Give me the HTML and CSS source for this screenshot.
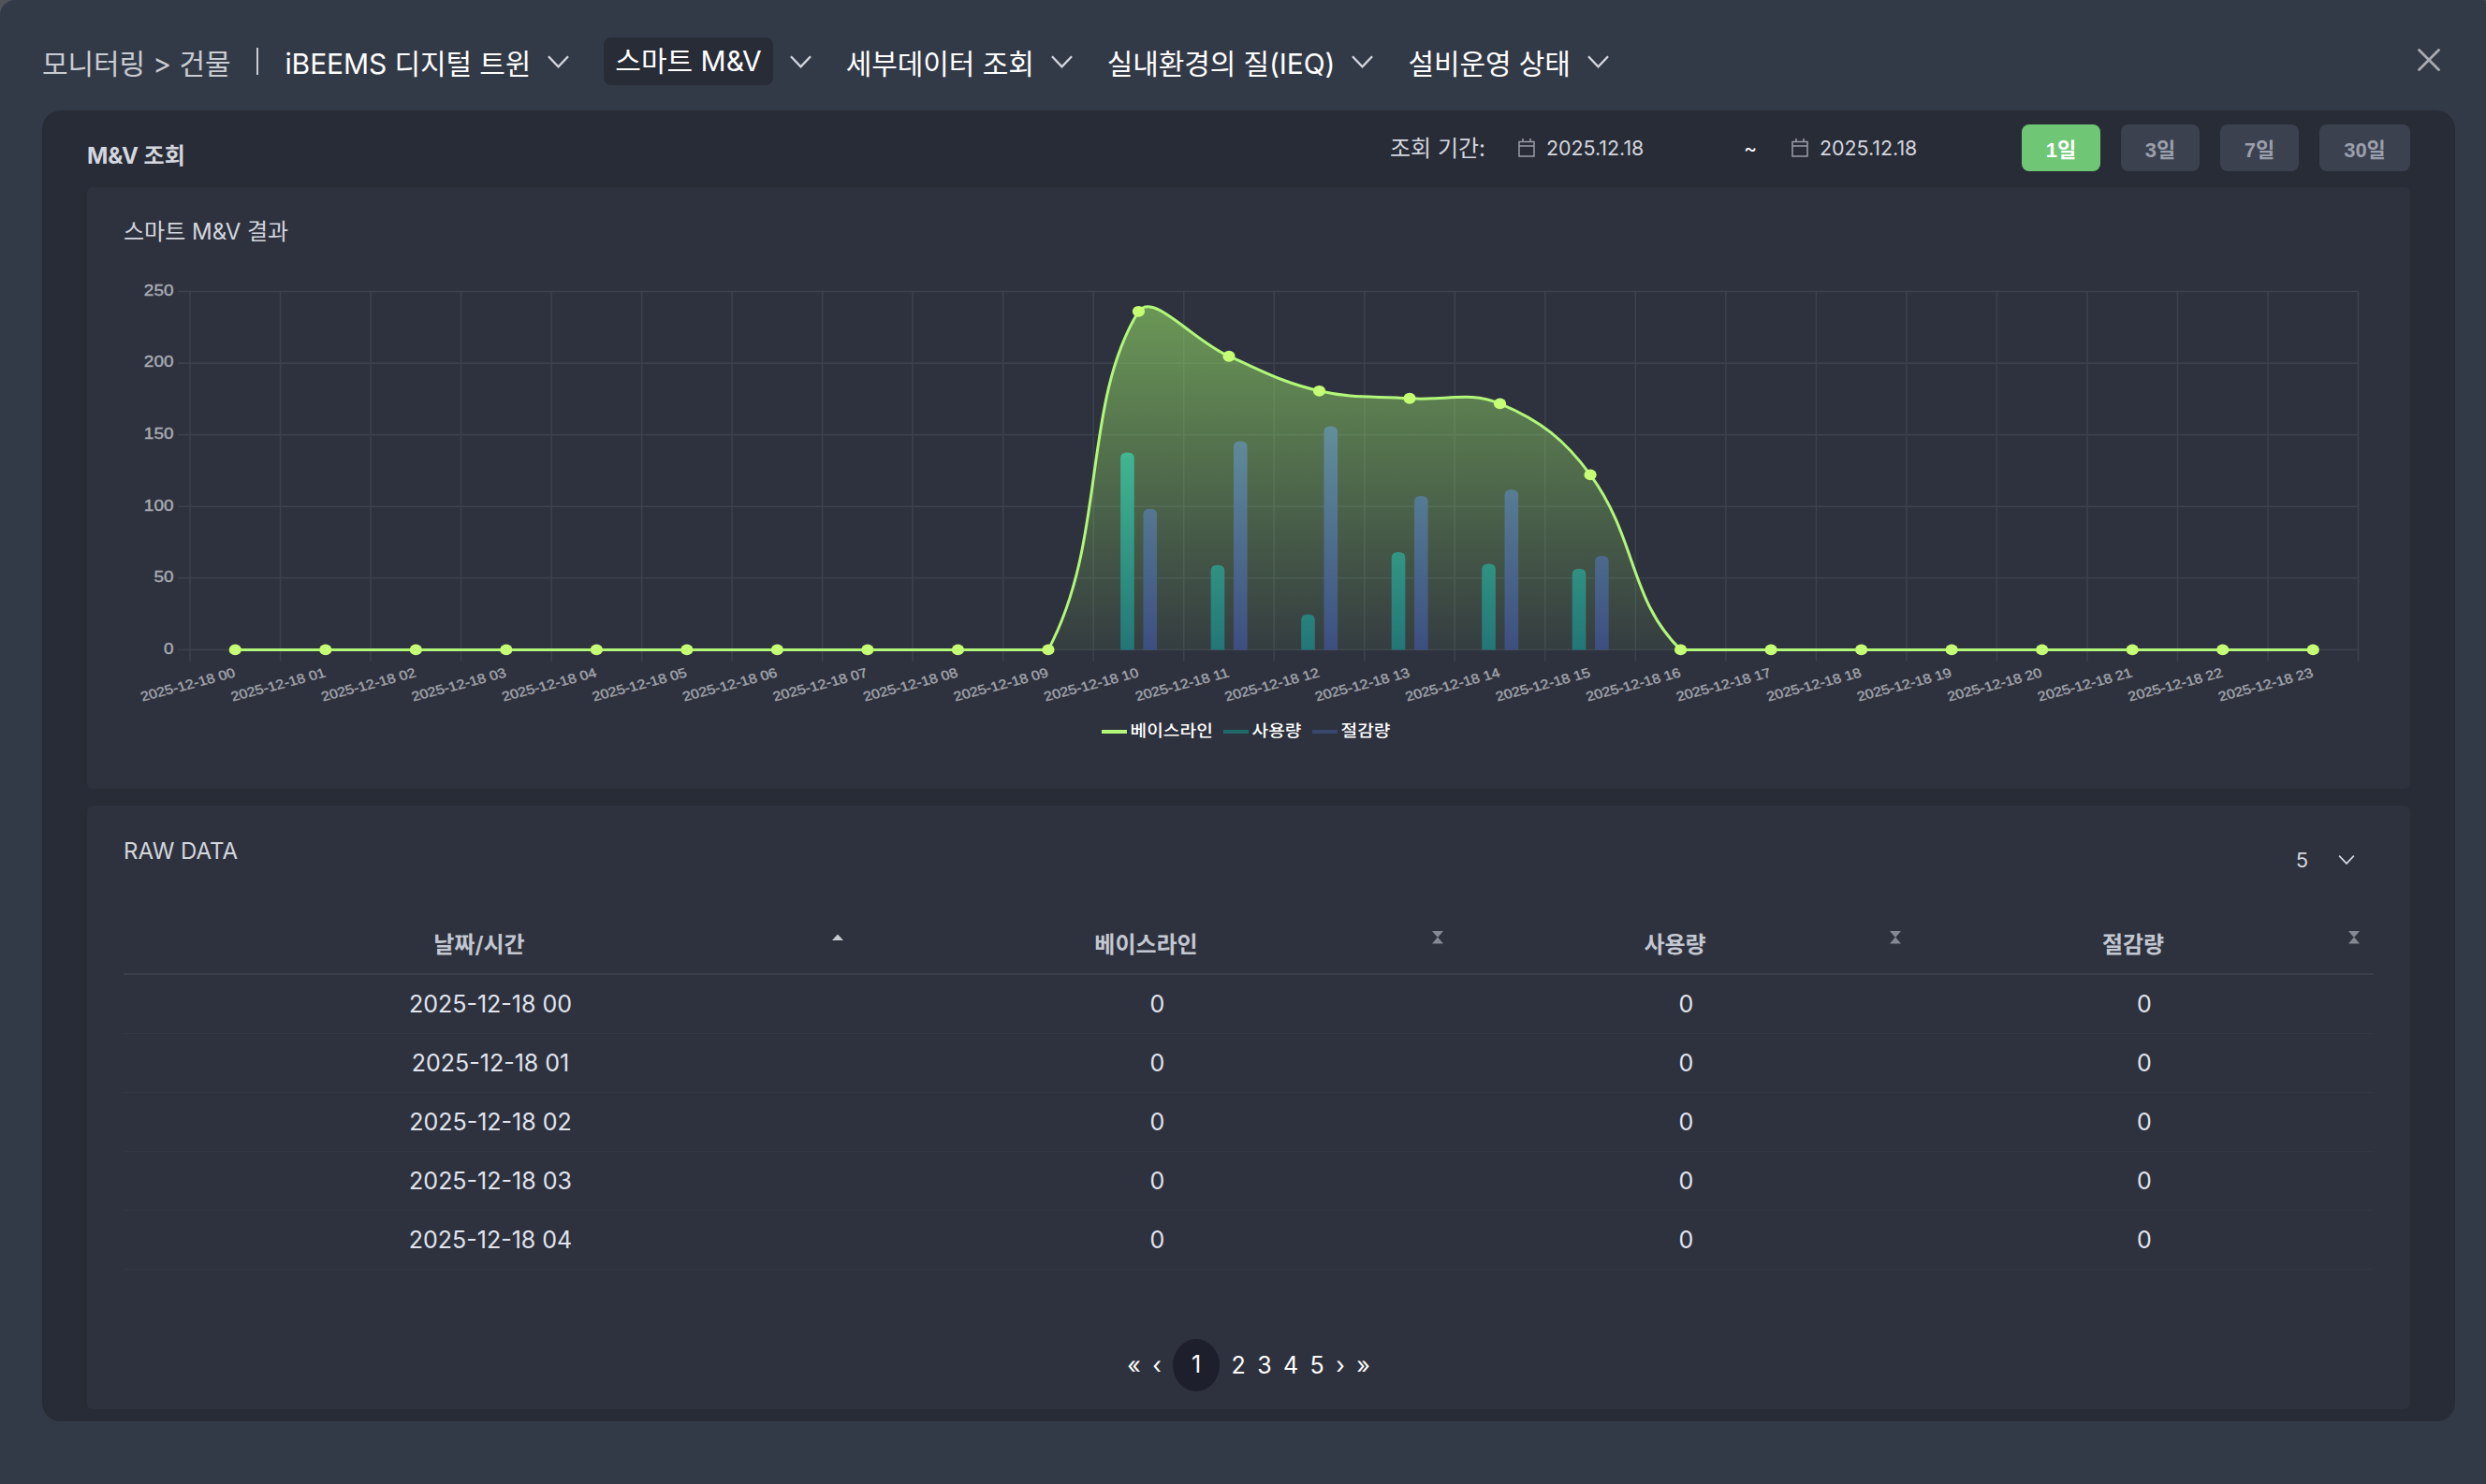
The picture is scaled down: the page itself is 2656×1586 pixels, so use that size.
FILE: index.html
```html
<!DOCTYPE html>
<html lang="ko">
<head>
    <meta charset="UTF-8">
    <meta name="viewport" content="width=device-width, initial-scale=1.0">
    <title>스마트 M&amp;V</title>
    <link rel="stylesheet" href="styles.css">
</head>
<body>
    <div class="modal">
        <div class="header">
            <div class="breadcrumb">모니터링 &gt; 건물</div>
            <div class="divider"></div>
            <div class="nav">
                <div class="nav-item"><span>iBEEMS 디지털 트윈</span><svg class="chevron" viewBox="0 0 24 14"><path d="M1 1L12 12.5L23 1"/></svg></div>
                <div class="nav-item active"><span>스마트 M&amp;V</span><svg class="chevron" viewBox="0 0 24 14"><path d="M1 1L12 12.5L23 1"/></svg></div>
                <div class="nav-item"><span>세부데이터 조회</span><svg class="chevron" viewBox="0 0 24 14"><path d="M1 1L12 12.5L23 1"/></svg></div>
                <div class="nav-item"><span>실내환경의 질(IEQ)</span><svg class="chevron" viewBox="0 0 24 14"><path d="M1 1L12 12.5L23 1"/></svg></div>
                <div class="nav-item"><span>설비운영 상태</span><svg class="chevron" viewBox="0 0 24 14"><path d="M1 1L12 12.5L23 1"/></svg></div>
            </div>
            <svg class="close" viewBox="0 0 24 24"><path d="M1.5 1.5L22.5 22.5M22.5 1.5L1.5 22.5"/></svg>
        </div>

        <div class="panel">
            <div class="toolbar">
                <h1>M&amp;V 조회</h1>
                <div class="period">
                    <span class="period-label">조회 기간:</span>
                    <div class="date">
                        <svg class="calendar" viewBox="0 0 18 20"><path d="M1 3.5H17V19H1ZM1 8H17M5 0V3.5M13 0V3.5"/></svg>
                        <span>2025.12.18</span>
                    </div>
                    <span class="tilde">~</span>
                    <div class="date">
                        <svg class="calendar" viewBox="0 0 18 20"><path d="M1 3.5H17V19H1ZM1 8H17M5 0V3.5M13 0V3.5"/></svg>
                        <span>2025.12.18</span>
                    </div>
                </div>
                <div class="range">
                    <button class="selected">1일</button>
                    <button>3일</button>
                    <button>7일</button>
                    <button>30일</button>
                </div>
            </div>

            <div class="card chart-card">
                <h2>스마트 M&amp;V 결과</h2>
                <svg id="chart" class="chart" viewBox="0 0 2442 520">
                    <defs>
                        <linearGradient id="areaFill" gradientUnits="userSpaceOnUse" x1="0" y1="32" x2="0" y2="415">
                            <stop offset="0" stop-color="#96e168" stop-opacity="0.6"/>
                            <stop offset="1" stop-color="#96e168" stop-opacity="0.06"/>
                        </linearGradient>
                        <linearGradient id="usageFill" gradientUnits="userSpaceOnUse" x1="0" y1="175" x2="0" y2="415">
                            <stop offset="0" stop-color="#44bf95"/>
                            <stop offset="1" stop-color="#237677"/>
                        </linearGradient>
                        <linearGradient id="savingFill" gradientUnits="userSpaceOnUse" x1="0" y1="175" x2="0" y2="415">
                            <stop offset="0" stop-color="#628f9b"/>
                            <stop offset="1" stop-color="#3c4f80"/>
                        </linearGradient>
                    </defs>
                </svg>
            </div>

            <div class="card table-card">
                <div class="table-top">
                    <h2>RAW DATA</h2>
                    <div class="page-size"><span>5</span><svg class="chevron small" viewBox="0 0 24 14"><path d="M1 1L12 12.5L23 1"/></svg></div>
                </div>
                <table>
                    <thead>
                        <tr>
                            <th class="col-date"><div class="th"><span>날짜/시간</span><svg class="sort on" viewBox="0 0 12 14"><path d="M0 10H12L6 3.5Z"/></svg></div></th>
                            <th class="col-base"><div class="th"><span>베이스라인</span><svg class="sort" viewBox="0 0 12 14"><path d="M0 0H12L6 7ZM0 13.5H12L6 6.5Z"/></svg></div></th>
                            <th class="col-use"><div class="th"><span>사용량</span><svg class="sort" viewBox="0 0 12 14"><path d="M0 0H12L6 7ZM0 13.5H12L6 6.5Z"/></svg></div></th>
                            <th class="col-save"><div class="th"><span>절감량</span><svg class="sort" viewBox="0 0 12 14"><path d="M0 0H12L6 7ZM0 13.5H12L6 6.5Z"/></svg></div></th>
                        </tr>
                    </thead>
                    <tbody>
                        <tr><td>2025-12-18 00</td><td>0</td><td>0</td><td>0</td></tr>
                        <tr><td>2025-12-18 01</td><td>0</td><td>0</td><td>0</td></tr>
                        <tr><td>2025-12-18 02</td><td>0</td><td>0</td><td>0</td></tr>
                        <tr><td>2025-12-18 03</td><td>0</td><td>0</td><td>0</td></tr>
                        <tr><td>2025-12-18 04</td><td>0</td><td>0</td><td>0</td></tr>
                    </tbody>
                </table>
                <div class="pagination">
                    <span>«</span>
                    <span>‹</span>
                    <span class="current">1</span>
                    <span>2</span>
                    <span>3</span>
                    <span>4</span>
                    <span>5</span>
                    <span>›</span>
                    <span>»</span>
                </div>
            </div>
        </div>
    </div>
    <script src="chart.js"></script>
</body>
</html>
```
FILE: styles.css
```css
* {
    box-sizing: border-box;
}
body {
    margin: 0;
    background-color: #50535a;
    color: #d3d6de;
    font-family: 'Inter', 'Noto Sans CJK KR', sans-serif;
}
h1, h2 {
    margin: 0;
    font-size: 24px;
    line-height: 32px;
}
h2 {
    padding-top: 2px;
    font-weight: 400;
}
.modal {
    height: 1586px;
    padding: 0 33px 0 45px;
    background-color: #333a47;
    border-radius: 16px 3px 0 0;
}
.header {
    display: flex;
    align-items: center;
    height: 118px;
    padding-top: 13px;
    font-size: 30px;
}
.breadcrumb {
    color: #c9ccd3;
    letter-spacing: -0.1px;
}
.divider {
    width: 2px;
    height: 29px;
    margin: 0 28px;
    background-color: #c9ccd3;
}
.nav {
    display: flex;
    gap: 37px;
    color: #fff;
}
.nav-item {
    display: flex;
    align-items: center;
    gap: 18px;
    letter-spacing: -0.1px;
}
.nav-item.active span {
    height: 51px;
    padding: 0 12px;
    line-height: 50px;
    background-color: #282c37;
    border-radius: 8px;
    letter-spacing: 0;
}
svg path {
    fill: none;
    stroke: #d3d6de;
    stroke-width: 2.4;
}
.chevron {
    width: 23px;
    height: 14px;
}
.chevron.small {
    width: 18px;
    height: 10px;
}
.close {
    width: 24px;
    height: 24px;
    margin: 0 16px 4px auto;
}
.close path {
    stroke: #a9abb0;
    stroke-width: 2.8;
    stroke-linecap: round;
}
.panel {
    height: 1401px;
    padding: 0 48px;
    background-color: #282c37;
    border-radius: 20px;
}
.toolbar {
    display: flex;
    height: 82px;
}
.toolbar h1 {
    width: 1392px;
    padding-top: 33px;
}
.period {
    display: flex;
    align-items: center;
    width: 675px;
    height: 80px;
    font-size: 21.4px;
}
.period-label {
    width: 137px;
    padding-bottom: 3px;
    font-size: 24px;
}
.date {
    display: flex;
    align-items: center;
    gap: 12px;
    width: 241px;
}
.calendar {
    width: 18px;
    height: 20px;
}
.calendar path {
    stroke: #9a9da6;
    stroke-width: 1.5;
}
.tilde {
    width: 51px;
    color: #fff;
}
.range {
    display: flex;
    gap: 22px;
    padding-top: 15px;
}
button {
    width: 84px;
    height: 50px;
    padding: 0;
    color: #9a9fac;
    background-color: #3c414f;
    border: none;
    border-radius: 8px;
    font-family: 'Liberation Sans', Arial, 'Noto Sans CJK KR', sans-serif;
    font-size: 22px;
    font-weight: 700;
}
button:last-child {
    width: 97px;
}
button.selected {
    color: #fff;
    background-color: #6fc674;
}
.card {
    padding: 30px 39px 0;
    background-color: #2e323e;
    border-radius: 6px;
}
.chart-card {
    height: 643px;
    margin-bottom: 18px;
}
.chart {
    display: block;
    width: 2442px;
    height: 520px;
    margin-top: 16px;
}
.grid {
    stroke: #3b414d;
    stroke-width: 1.6;
}
.axis-y {
    fill: #a8abb3;
    stroke: #a8abb3;
    stroke-width: 0.4;
    font: 16.5px 'Liberation Sans', Arial, sans-serif;
    text-anchor: end;
}
.axis-x {
    fill: #a0a3ab;
    stroke: #a0a3ab;
    stroke-width: 0.4;
    font: 14px 'Liberation Sans', Arial, sans-serif;
    text-anchor: end;
}
.legend {
    fill: #fff;
    font: 500 17px 'Noto Sans CJK KR', sans-serif;
}
.chart .line {
    stroke: #b2f779;
    stroke-width: 3;
}
.chart .area {
    fill: url(#areaFill);
    stroke: none;
}
.chart .usage {
    fill: url(#usageFill);
    stroke: none;
}
.chart .saving {
    fill: url(#savingFill);
    stroke: none;
}
.point {
    fill: #c5fd74;
}
.table-card {
    height: 645px;
}
.table-top {
    display: flex;
    justify-content: space-between;
    height: 99px;
}
.table-top h2 {
    padding-top: 3px;
}
.page-size {
    display: flex;
    align-items: center;
    gap: 32px;
    height: 56px;
    padding-right: 20px;
    font-size: 22px;
}
table {
    width: 2404px;
    table-layout: fixed;
    border-collapse: collapse;
    color: #e0e4ee;
    font-size: 25px;
}
.col-date { width: 784px; }
.col-base { width: 641px; }
.col-use { width: 489px; }
.col-save { width: 490px; }
th {
    height: 51px;
    padding: 0 15px 0 3px;
    border-bottom: 2px solid #3a3f4b;
    color: #c3c7d1;
    font-size: 24px;
    font-weight: 600;
}
.th {
    display: flex;
    align-items: flex-start;
    height: 40px;
}
.th span {
    flex: 1;
    line-height: 30px;
}
.sort {
    width: 12px;
    height: 14px;
}
.sort path {
    fill: #858994;
    stroke: none;
}
.sort.on path {
    fill: #c9ccd3;
}
td {
    height: 63px;
    padding: 1px 0 0;
    border-bottom: 1px solid #323742;
    text-align: center;
}
.pagination {
    display: flex;
    justify-content: center;
    align-items: center;
    gap: 12.4px;
    margin-top: 74px;
    color: #fff;
    font-size: 25px;
}
.pagination .current {
    width: 50px;
    height: 56px;
    line-height: 54px;
    background-color: #1d202c;
    border-radius: 50%;
    text-align: center;
}
```
FILE: chart.js
```js
var NS = 'http://www.w3.org/2000/svg';
var svg = document.getElementById('chart');

var baseline = [0, 0, 0, 0, 0, 0, 0, 0, 0, 0, 236.1, 204.8, 180.6, 175.4, 171.7, 122.1, 0, 0, 0, 0, 0, 0, 0, 0];
var usage = { 10: 137.7, 11: 59.2, 12: 24.7, 13: 68.1, 14: 60, 15: 56.5 };
var saving = { 10: 98.4, 11: 145.6, 12: 155.9, 13: 107.3, 14: 111.7, 15: 65.6 };

var left = 71, top0 = 31.5, bottom = 414.4, step = 96.52, stretch = 1.15;

function y(v) { return bottom - v * (bottom - top0) / 250; }
function x(i) { return left + step * (i + 0.5); }

function add(tag, attrs, text) {
    var el = document.createElementNS(NS, tag);
    for (var k in attrs) el.setAttribute(k, attrs[k]);
    if (text !== undefined) el.textContent = text;
    svg.appendChild(el);
    return el;
}

// grid
for (var i = 0; i <= 24; i++) {
    add('line', { 'class': 'grid', x1: left + i * step, x2: left + i * step, y1: top0, y2: bottom + 12 });
}
for (var v = 0; v <= 250; v += 50) {
    add('line', { 'class': 'grid', x1: left - 13, x2: left + 24 * step, y1: y(v), y2: y(v) });
    add('text', { 'class': 'axis-y', transform: 'translate(53.5 ' + (y(v) + 4.3) + ') scale(' + stretch + ' 1)' }, v);
}

// bezier control points, kept inside the plot area
function clamp(v) { return Math.max(top0, Math.min(bottom, v)); }
var pts = baseline.map(function (v, i) { return { x: x(i), y: y(v) }; });
pts.forEach(function (p, i) {
    var a = pts[i - 1] || p, b = pts[i + 1] || p;
    var d1 = Math.hypot((p.x - a.x) / stretch, p.y - a.y);
    var d2 = Math.hypot((b.x - p.x) / stretch, b.y - p.y);
    var f1 = 0.4 * d1 / (d1 + d2), f2 = 0.4 * d2 / (d1 + d2);
    p.c1 = [p.x - f1 * (b.x - a.x), clamp(p.y - f1 * (b.y - a.y))];
    p.c2 = [p.x + f2 * (b.x - a.x), clamp(p.y + f2 * (b.y - a.y))];
});
var d = 'M' + pts[0].x + ' ' + pts[0].y;
for (i = 1; i < pts.length; i++) {
    d += 'C' + pts[i - 1].c2 + ' ' + pts[i].c1 + ' ' + pts[i].x + ',' + pts[i].y;
}
add('path', { 'class': 'area', d: d + 'L' + x(23) + ' ' + bottom + 'H' + x(0) + 'Z' });

function bar(cls, cx, v) {
    add('path', { 'class': cls, d: 'M' + (cx - 7.3) + ' ' + bottom + 'V' + (y(v) + 6) + 'q0 -6 7.3 -6q7.3 0 7.3 6V' + bottom + 'Z' });
}
for (i = 10; i <= 15; i++) {
    bar('usage', x(i) - 12, usage[i]);
    bar('saving', x(i) + 12.3, saving[i]);
}

add('path', { 'class': 'line', d: d });
pts.forEach(function (p, i) {
    add('ellipse', { 'class': 'point', cx: p.x, cy: p.y, rx: 6.6, ry: 5.9 });
    add('text', {
        'class': 'axis-x',
        transform: 'translate(' + (p.x + 1) + ' 443) scale(' + stretch + ' 1) rotate(-17)'
    }, '2025-12-18 ' + (i < 10 ? '0' + i : i));
});

// legend
[[1045, '베이스라인', '#b2f779'], [1175, '사용량', '#20696b'], [1270, '절감량', '#38486f']].forEach(function (l) {
    add('line', { x1: l[0], x2: l[0] + 27, y1: 502, y2: 502, stroke: l[2], 'stroke-width': 4 });
    add('text', { 'class': 'legend', transform: 'translate(' + (l[0] + 30.5) + ' 507) scale(1.13 1)' }, l[1]);
});
```
